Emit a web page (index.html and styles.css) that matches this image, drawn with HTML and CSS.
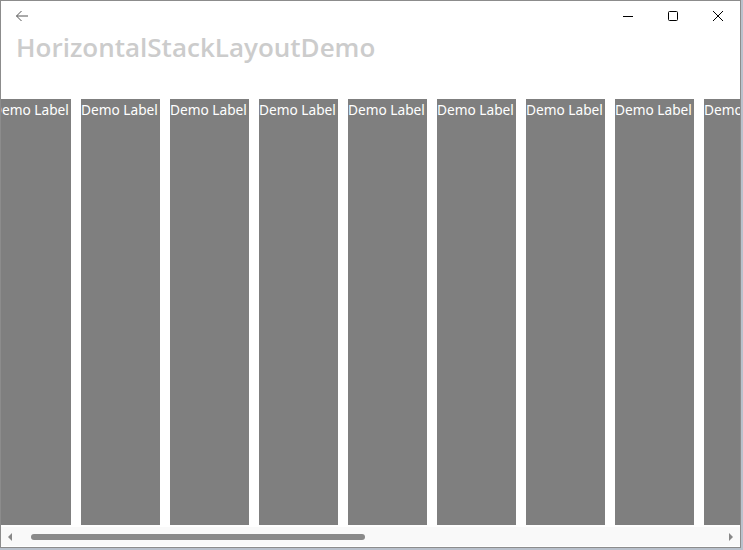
FILE: index.html
```html
<!DOCTYPE html>
<html>
<head>
    <title>HorizontalStackLayoutDemo</title>
    <meta charset="UTF-8">
    <link rel="stylesheet" href="styles.css">
</head>
<body>
    <div class="window">
        <div class="titlebar">
            <button class="back" aria-label="Back">
                <svg width="14" height="12" viewBox="0 0 14 12"><path d="M13 6H1.5M6.5 1L1.5 6l5 5" fill="none" stroke="#555" stroke-width="1"/></svg>
            </button>
            <div class="controls">
                <span class="ctl"><svg width="10" height="10" viewBox="0 0 10 10"><path d="M0 5.5h10" stroke="#000" stroke-width="1"/></svg></span>
                <span class="ctl"><svg width="10" height="10" viewBox="0 0 10 10"><rect x="0.5" y="0.5" width="9" height="9" rx="1" fill="none" stroke="#000" stroke-width="1"/></svg></span>
                <span class="ctl"><svg width="10" height="10" viewBox="0 0 10 10"><path d="M0 0L10 10M10 0L0 10" stroke="#000" stroke-width="1"/></svg></span>
            </div>
        </div>
        <h1 class="page-title">HorizontalStackLayoutDemo</h1>

        <div class="stack-viewport">
            <div class="stack">
                <div class="item">Demo Label</div>
                <div class="item">Demo Label</div>
                <div class="item">Demo Label</div>
                <div class="item">Demo Label</div>
                <div class="item">Demo Label</div>
                <div class="item">Demo Label</div>
                <div class="item">Demo Label</div>
                <div class="item">Demo Label</div>
                <div class="item">Demo Label</div>
                <div class="item">Demo Label</div>
            </div>
        </div>

        <div class="hscroll">
            <span class="arrow left"></span>
            <div class="track"><div class="thumb"></div></div>
            <span class="arrow right"></span>
        </div>
    </div>
</body>
</html>
```

FILE: styles.css
```css
body {
    margin: 0;
    width: 743px;
    height: 550px;
    overflow: hidden;
    background: #b9c1cc;
    font-family: "Noto Sans", "Open Sans", sans-serif;
}
.window {
    width: 739px;
    height: 546px;
    border: 1px solid #8c8c8c;
    background: #fff;
    display: flex;
    flex-direction: column;
    overflow: hidden;
}
.titlebar {
    height: 30px;
    display: flex;
    align-items: center;
    justify-content: space-between;
}
.back {
    border: none;
    background: none;
    padding: 0;
    margin-left: 14px;
    height: 30px;
    display: flex;
    align-items: center;
}
.controls {
    display: flex;
}
.ctl {
    width: 45px;
    height: 30px;
    display: flex;
    align-items: center;
    justify-content: center;
}
.page-title {
    margin: 0 0 0 15px;
    font-family: "Open Sans", "Noto Sans", sans-serif;
    font-weight: 600;
    font-size: 26px;
    line-height: 32px;
    color: #cccccc;
}
.stack-viewport {
    margin-top: 36px;
    height: 426px;
    overflow: hidden;
}
.stack {
    display: flex;
    gap: 10px;
    height: 100%;
    margin-left: -9px;
}
.item {
    flex: 0 0 79px;
    background: #7f7f7f;
    color: #fff;
    font-size: 13.7px;
    line-height: 20px;
    padding-top: 1px;
    white-space: nowrap;
    overflow: hidden;
}
.hscroll {
    margin-top: 2px;
    height: 19px;
    background: #f9f9f9;
    display: flex;
    align-items: center;
    padding: 0 7px;
}
.arrow {
    width: 0;
    height: 0;
    border-top: 4px solid transparent;
    border-bottom: 4px solid transparent;
}
.arrow.left {
    border-right: 4px solid #888;
}
.arrow.right {
    border-left: 4px solid #888;
}
.track {
    flex: 1;
    padding: 0 16px 0 19px;
}
.thumb {
    width: 334px;
    height: 6px;
    border-radius: 3px;
    background: #8a8a8a;
}
```
